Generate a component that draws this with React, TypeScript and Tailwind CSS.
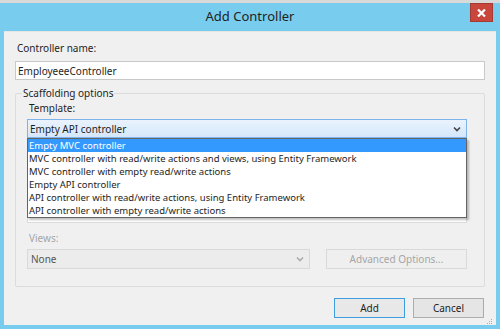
import React from "react";

const options = [
  "Empty MVC controller",
  "MVC controller with read/write actions and views, using Entity Framework",
  "MVC controller with empty read/write actions",
  "Empty API controller",
  "API controller with read/write actions, using Entity Framework",
  "API controller with empty read/write actions",
];

const Chevron = ({ color = "#444" }: { color?: string }) => (
  <svg width="8" height="6" viewBox="0 0 8 6">
    <path d="M1 1.5 L4 4.5 L7 1.5" fill="none" stroke={color} strokeWidth="1.6" />
  </svg>
);

const App: React.FC = () => {
  return (
    <div
      className="w-[500px] h-[329px] overflow-hidden bg-[#d9d9d9] pt-[3px] text-[10px] text-[#1e1e1e]"
      style={{ fontFamily: '"Noto Sans", "Open Sans", sans-serif' }}
    >
      <div className="h-[326px] bg-[#78cdee] flex flex-col px-[4px] pb-[5px]">
        {/* TITLE BAR */}
        <div className="h-[28px] flex items-center relative shrink-0">
          <div className="flex-1 text-center text-[13px] text-[#222] -mt-[1px]">Add Controller</div>
          <div className="absolute right-[3px] top-0 w-[23px] h-[19px] bg-[#c9463d] border border-[#a33a33] flex items-center justify-center">
            <svg width="9" height="8" viewBox="0 0 9 8">
              <path d="M1 0.5 L8 7.5 M8 0.5 L1 7.5" stroke="#fff" strokeWidth="2.2" />
            </svg>
          </div>
        </div>

        {/* CONTENT */}
        <div className="flex-1 bg-[#f0f0f0] border-t border-[#e6e6e6] px-[11px] pt-[9px] flex flex-col">
          <div className="leading-[14px] pl-[2px]">Controller name:</div>
          <div className="mt-[6px] h-[19px] bg-white border border-[#c9c9c9] flex items-center px-[2px] leading-none">
            EmployeeeController
          </div>

          {/* GROUP */}
          <div className="mt-[13px] relative border border-[#dcdcdc] rounded-[2px] h-[194px] pl-[11px] pr-[17px] pt-[7px]">
            <div className="absolute -top-[8px] left-[6px] bg-[#f0f0f0] px-[1px] leading-[14px]">Scaffolding options</div>
            <div className="leading-[14px] pl-[2px]">Template:</div>

            <div className="relative mt-[4px]">
              <div className="h-[19px] border border-[#7eb4ea] bg-gradient-to-b from-[#eaf3fd] to-[#d4e7fb] flex items-center pl-[2px] pr-[5px] leading-none">
                <span className="flex-1">Empty API controller</span>
                <Chevron />
              </div>

              {/* field partly hidden under the list */}
              <div className="mt-[63px] h-[22px] bg-white border border-[#dcdcdc]" />

              {/* DROPDOWN LIST */}
              <div className="absolute left-0 right-0 top-[19px] bg-white border border-[#646464] shadow-[2px_2px_2px_rgba(0,0,0,0.25)] text-[9.5px] leading-[13px]">
                {options.map((o, i) => (
                  <div
                    key={o}
                    className={
                      i === 0
                        ? "bg-[#3399ff] text-white pl-[1px] h-[13px] whitespace-nowrap"
                        : "pl-[1px] h-[13px] whitespace-nowrap"
                    }
                  >
                    {o}
                  </div>
                ))}
              </div>
            </div>

            <div className="mt-[8px] text-[#a6a6a6] leading-[14px] pl-[2px]">Views:</div>
            <div className="mt-[4px] flex gap-[16px]">
              <div className="w-[283px] h-[20px] border border-[#d9d9d9] bg-[#ececec] flex items-center pl-[3px] pr-[5px] leading-none text-[#555]">
                <span className="flex-1">None</span>
                <Chevron color="#aaa" />
              </div>
              <div className="flex-1 h-[20px] border border-[#d9d9d9] bg-[#efefef] flex items-center justify-center text-[#a6a6a6] leading-none">
                Advanced Options...
              </div>
            </div>
          </div>

          {/* ACTIONS */}
          <div className="mt-[11px] flex justify-end gap-[8px] pr-[1px]">
            <button className="w-[71px] h-[20px] border border-[#3c9fe0] bg-[#e8e8e8] leading-none">Add</button>
            <button className="w-[71px] h-[20px] border border-[#acacac] bg-[#e5e5e5] leading-none">Cancel</button>
          </div>
          <div className="flex justify-end -mr-[8px] mt-[1px]">
            <svg width="6" height="6" viewBox="0 0 6 6">
              <rect x="4" y="0" width="1" height="1" fill="#aaa" />
              <rect x="2" y="2" width="1" height="1" fill="#aaa" />
              <rect x="4" y="2" width="1" height="1" fill="#aaa" />
              <rect x="0" y="4" width="1" height="1" fill="#aaa" />
              <rect x="2" y="4" width="1" height="1" fill="#aaa" />
              <rect x="4" y="4" width="1" height="1" fill="#aaa" />
            </svg>
          </div>
        </div>
      </div>
    </div>
  );
};

export default App;
